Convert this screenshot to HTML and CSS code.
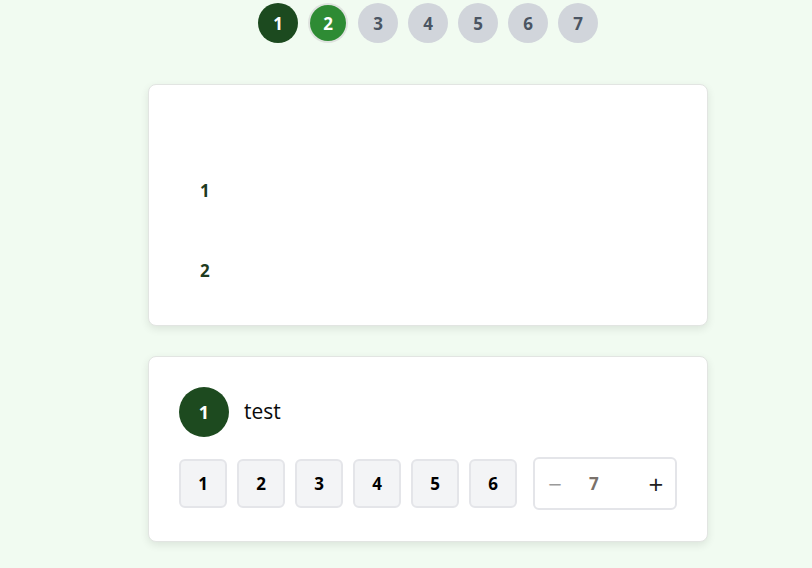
FILE: index.html
```html
<!DOCTYPE html>
<html>
<head>
<meta charset="utf-8">
<link rel="stylesheet" href="styles.css">
</head>
<body>
<div class="page">
  <div class="steps">
    <div class="step done">1</div>
    <div class="step current">2</div>
    <div class="step">3</div>
    <div class="step">4</div>
    <div class="step">5</div>
    <div class="step">6</div>
    <div class="step">7</div>
  </div>
  <div class="card card-list">
    <div class="item">1</div>
    <div class="item">2</div>
  </div>
  <div class="card card-pick">
    <div class="head">
      <div class="badge">1</div>
      <div class="title">test</div>
    </div>
    <div class="row">
      <button class="opt">1</button>
      <button class="opt">2</button>
      <button class="opt">3</button>
      <button class="opt">4</button>
      <button class="opt">5</button>
      <button class="opt">6</button>
      <div class="stepper">
        <span class="minus">−</span>
        <span class="val">7</span>
        <span class="plus">+</span>
      </div>
    </div>
  </div>
</div>
</body>
</html>
```
FILE: styles.css
```css
* { box-sizing: border-box; }
html, body { margin: 0; padding: 0; }
body {
  background: #f1fbf1;
  font-family: "Open Sans", "Noto Sans", sans-serif;
  width: 812px;
  height: 568px;
  overflow: hidden;
}
.page {
  display: flex;
  flex-direction: column;
  align-items: center;
  padding: 3px 0 0 44px;
}
.steps {
  display: flex;
  gap: 10px;
}
.step {
  width: 40px;
  height: 40px;
  border-radius: 50%;
  background: #d1d5db;
  color: #4b5563;
  font-weight: 700;
  font-size: 17px;
  display: flex;
  align-items: center;
  justify-content: center;
}
.step.done { background: #1c4a1f; color: #fff; }
.step.current { background: #2e8b34; color: #fff; box-shadow: 0 0 0 2px #dfe3df; width: 36px; height: 36px; margin: 2px; }
.card {
  width: 560px;
  background: #fff;
  border: 1px solid #e2e5e2;
  border-radius: 8px;
  box-shadow: 0 3px 8px rgba(0,0,0,0.09);
}
.card-list {
  margin-top: 41px;
  height: 242px;
  padding: 95px 0 0 51px;
  display: flex;
  flex-direction: column;
  gap: 58px;
}
.item {
  font-size: 17px;
  font-weight: 700;
  color: #1e3b20;
  line-height: 22px;
}
.card-pick {
  margin-top: 30px;
  padding: 30px 30px 31px;
  display: flex;
  flex-direction: column;
  gap: 20px;
}
.head {
  display: flex;
  align-items: center;
  gap: 15px;
}
.badge {
  width: 50px;
  height: 50px;
  border-radius: 50%;
  background: #1d4a1f;
  color: #fff;
  font-size: 18px;
  font-weight: 700;
  display: flex;
  align-items: center;
  justify-content: center;
}
.title {
  font-size: 21px;
  color: #0a0a0a;
  padding-bottom: 2px;
}
.row {
  display: flex;
  align-items: center;
  gap: 10px;
}
.opt {
  width: 48px;
  height: 49px;
  border: 2px solid #e4e5e9;
  background: #f3f4f6;
  border-radius: 6px;
  font-family: inherit;
  font-size: 17px;
  font-weight: 700;
  color: #000;
  padding: 0;
}
.stepper {
  margin-left: 6px;
  width: 144px;
  height: 53px;
  border: 2px solid #e4e5e9;
  border-radius: 6px;
  display: flex;
  align-items: center;
  padding: 0 9px 0 10px;
}
.minus { color: #9a9a9a; font-size: 24px; width: 20px; text-align: center; }
.val { color: #7a716a; font-size: 17px; font-weight: 700; margin-left: 24px; flex: 1; }
.plus { color: #222; font-size: 26px; width: 20px; text-align: center; }
```
